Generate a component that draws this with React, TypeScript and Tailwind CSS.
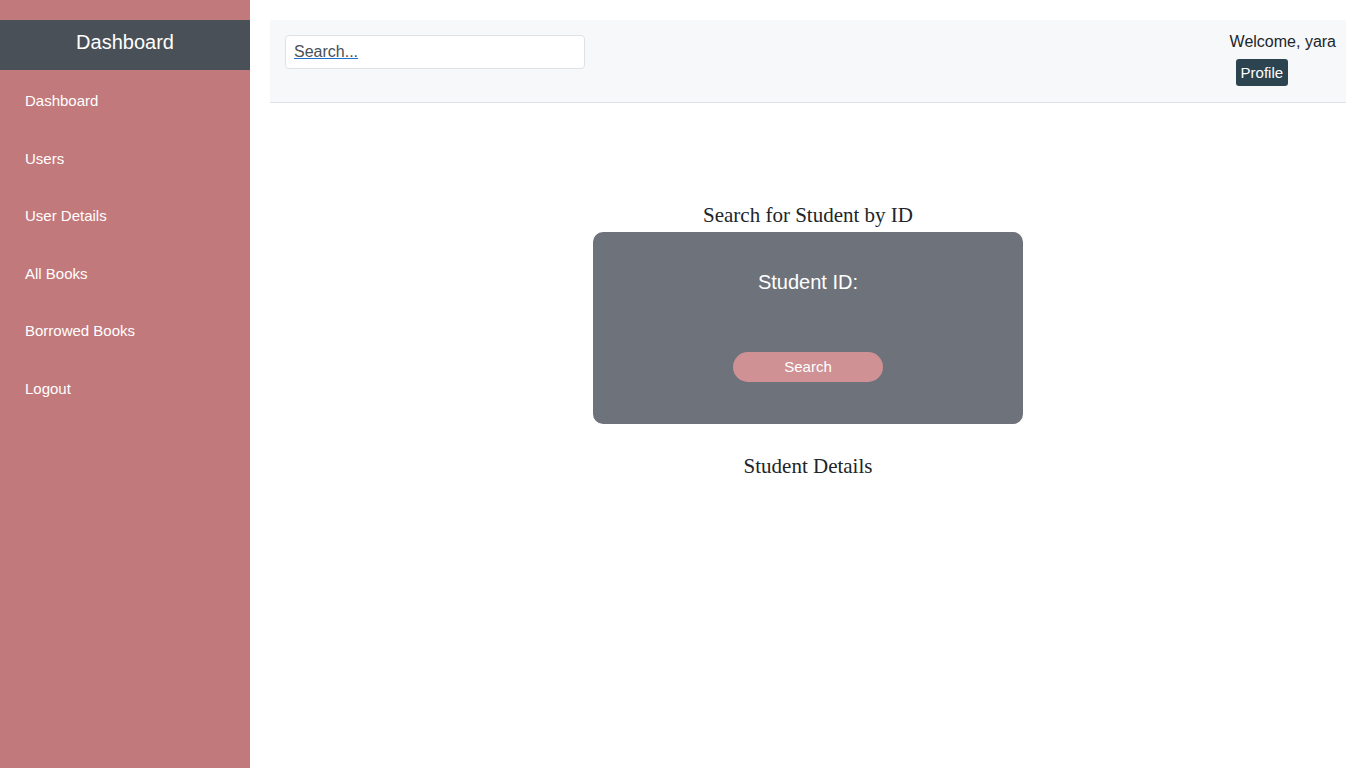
import React from "react";

const navItems = ["Dashboard", "Users", "User Details", "All Books", "Borrowed Books", "Logout"];

export default function App() {
  return (
    <div className="flex min-h-[768px] w-full font-['Liberation_Sans',Arial,sans-serif]">
      {/* Sidebar */}
      <aside className="w-[250px] shrink-0 bg-[#c2797b] pt-5">
        <div className="flex h-[50px] items-center justify-center bg-[#495057] pb-[6px] text-[20px] text-white">
          Dashboard
        </div>
        <nav className="flex flex-col pt-[13px]">
          {navItems.map((item) => (
            <a key={item} href="#" className="block h-[57.6px] px-[25px] pt-[8px] text-[15px] leading-[20px] text-white">
              {item}
            </a>
          ))}
        </nav>
      </aside>

      {/* Main */}
      <main className="flex-1 px-5 pt-5">
        <header className="flex h-[83px] items-start justify-between border-b border-[#dee2e6] bg-[#f7f8fa] pl-[15px] pr-[10px]">
          <div className="mt-[15px] flex h-[34px] w-[300px] items-center rounded border border-[#dee2e6] bg-white px-2">
            <a href="#" className="text-[16px] text-[#495057] underline decoration-[#1f6fd1]">
              Search...
            </a>
          </div>
          <div className="mt-[12px] flex flex-col items-start">
            <span className="text-[16px] leading-[20px] text-[#212529]">Welcome, yara</span>
            <button className="ml-[6px] mt-[7px] rounded-[3px] bg-[#2c4350] px-[5px] py-[4px] text-[15px] leading-[19px] text-white">
              Profile
            </button>
          </div>
        </header>

        <section className="flex flex-col items-center pt-[99px]">
          <h2 className="font-['Liberation_Serif',serif] text-[21px] leading-[26px] text-[#212529]">
            Search for Student by ID
          </h2>
          <div className="mt-[4px] flex h-[192px] w-[430px] flex-col items-center rounded-[10px] bg-[#6e727a] pt-[37px]">
            <label className="text-[20px] leading-[26px] text-white">Student ID:</label>
            <button className="mt-[57px] h-[30px] w-[150px] rounded-full bg-[#cf9194] text-[15px] text-white">
              Search
            </button>
          </div>
          <h3 className="mt-[29px] font-['Liberation_Serif',serif] text-[21px] leading-[26px] text-[#212529]">
            Student Details
          </h3>
        </section>
      </main>
    </div>
  );
}
